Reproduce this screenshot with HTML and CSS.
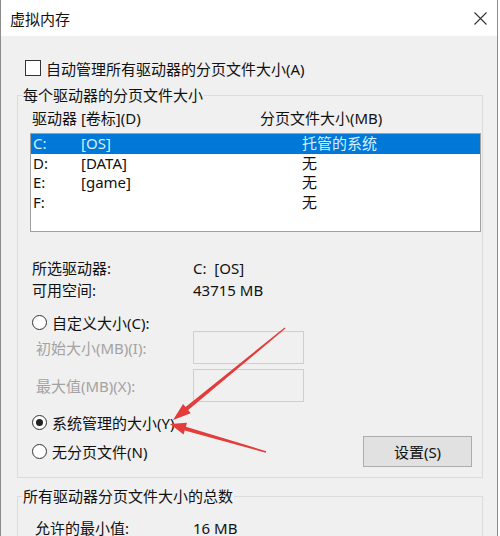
FILE: index.html
```html
<!DOCTYPE html>
<html lang="zh-CN">
<head>
  <meta charset="UTF-8">
  <meta name="viewport" content="width=device-width, initial-scale=1.0">
  <title>虚拟内存</title>
  <link rel="stylesheet" href="styles.css">
</head>
<body>
  <div class="window">
    <div class="titlebar">
      <span class="title">虚拟内存</span>
      <svg class="close" width="13" height="13" viewBox="0 0 13 13">
        <path d="M0.5 0.5 L12.5 12.5 M12.5 0.5 L0.5 12.5" stroke="#333" stroke-width="1.1" fill="none"/>
      </svg>
    </div>

    <div class="content">
      <div class="check-row"><span class="checkbox"></span>自动管理所有驱动器的分页文件大小(A)</div>

      <fieldset class="group">
        <legend>每个驱动器的分页文件大小</legend>
        <div class="list-head">
          <span>驱动器 [卷标](D)</span>
          <span>分页文件大小(MB)</span>
        </div>
        <div class="listbox">
          <div class="list-row selected"><span>C:</span><span>[OS]</span><span>托管的系统</span></div>
          <div class="list-row"><span>D:</span><span>[DATA]</span><span>无</span></div>
          <div class="list-row"><span>E:</span><span>[game]</span><span>无</span></div>
          <div class="list-row"><span>F:</span><span></span><span>无</span></div>
        </div>

        <div class="info">
          <span>所选驱动器:</span><span>C:&nbsp;&nbsp;[OS]</span>
          <span>可用空间:</span><span>43715 MB</span>
        </div>

        <div class="radio-row custom"><span class="radio"></span>自定义大小(C):</div>
        <div class="field-row first"><span class="field-label">初始大小(MB)(I):</span><span class="field-box"></span></div>
        <div class="field-row"><span class="field-label">最大值(MB)(X):</span><span class="field-box"></span></div>
        <div class="radio-row managed"><span class="radio checked"></span>系统管理的大小(Y)</div>
        <div class="last-row">
          <div class="radio-row"><span class="radio"></span>无分页文件(N)</div>
          <button class="btn">设置(S)</button>
        </div>
      </fieldset>

      <fieldset class="group total">
        <legend>所有驱动器分页文件大小的总数</legend>
        <div class="info info-total">
          <span>允许的最小值:</span><span>16 MB</span>
        </div>
      </fieldset>
    </div>

    <!-- red callout arrows drawn over the dialog -->
    <svg class="arrows" width="500" height="536" viewBox="0 0 500 536">
      <polygon fill="#e43b3b" points="284.6,327.4 185.6,407.1 183.1,404.0 173,420 190.7,413.2 188.2,410.1 285.4,328.6"/>
      <polygon fill="#e43b3b" points="266.2,451.2 185.9,426.7 187.0,422.8 170,424 183.6,434.4 184.7,430.5 265.8,452.8"/>
    </svg>
  </div>
</body>
</html>
```

FILE: styles.css
```css
body {
  margin: 0;
  background: #ffffff;
  font-family: "Noto Sans", "Noto Sans CJK SC", sans-serif;
  font-size: 15px;
  color: #111;
}

.window {
  position: relative;
  width: 498px;
  height: 536px;
  box-sizing: border-box;
  border-left: 1px solid #8c8c8c;
  border-right: 1px solid #8c8c8c;
  background: #f0f0f0;
  overflow: hidden;
}

.titlebar {
  height: 36px;
  background: #ffffff;
  display: flex;
  align-items: center;
  justify-content: space-between;
  padding: 0 10px 0 9px;
}

.title {
  line-height: 20px;
  margin-top: 1px;
}

.close {
  display: block;
}

.content {
  padding: 0 14px 0 16px;
}

.check-row {
  display: flex;
  align-items: center;
  height: 20px;
  margin-top: 22px;
  padding-left: 8px;
}

.checkbox {
  width: 16px;
  height: 16px;
  box-sizing: border-box;
  border: 1px solid #333;
  background: #fff;
  margin-right: 5px;
}

.group {
  margin: 7px 0 0;
  padding: 3px 1px 10px 14px;
  border: 1px solid #dcdcdc;
  min-width: 0;
}

.group legend {
  margin-left: -10px;
  padding: 0 1px;
  line-height: 20px;
}

.list-head {
  display: grid;
  grid-template-columns: 228px 1fr;
  line-height: 20px;
}

.listbox {
  margin: 5px 0 0 -2px;
  height: 99px;
  box-sizing: border-box;
  border: 1px solid #a0a0a0;
  background: #fff;
}

.list-row {
  display: grid;
  grid-template-columns: 48px 221px 1fr;
  height: 19.5px;
  line-height: 19.5px;
  padding-left: 2px;
}

.list-row.selected {
  background: #0078d7;
  color: #d4efff;
}

.info {
  display: grid;
  grid-template-columns: 161px 1fr;
  line-height: 22px;
  margin-top: 25px;
}

.radio-row {
  display: flex;
  align-items: center;
  height: 17px;
}

.radio-row.custom {
  margin-top: 13px;
}

.radio-row.managed {
  margin-top: 12px;
}

.radio {
  width: 15px;
  height: 15px;
  box-sizing: border-box;
  border: 1px solid #333;
  border-radius: 50%;
  background: #fff;
  margin-right: 5px;
  display: flex;
  align-items: center;
  justify-content: center;
}

.radio.checked::after {
  content: "";
  width: 7px;
  height: 7px;
  border-radius: 50%;
  background: #222;
}

.field-row {
  display: flex;
  align-items: center;
  margin-top: 5px;
  padding-left: 4px;
  color: #a3a3a3;
}

.field-row.first {
  margin-top: 0;
}

.field-label {
  width: 157px;
}

.field-box {
  width: 111px;
  height: 33px;
  box-sizing: border-box;
  border: 1px solid #cfcfcf;
}

.last-row {
  display: flex;
  align-items: center;
  justify-content: space-between;
  margin-top: 5px;
}

.btn {
  width: 109px;
  height: 31px;
  margin-right: 9px;
  background: #e1e1e1;
  border: 1px solid #adadad;
  font-family: inherit;
  font-size: 15px;
  color: #111;
  padding: 0;
}

.total {
  margin-top: 8px;
  padding-top: 11px;
}

.info-total {
  margin-top: 0;
  padding-left: 3px;
  grid-template-columns: 158px 1fr;
}

.arrows {
  position: absolute;
  top: 0;
  left: -1px;
  pointer-events: none;
}
```
